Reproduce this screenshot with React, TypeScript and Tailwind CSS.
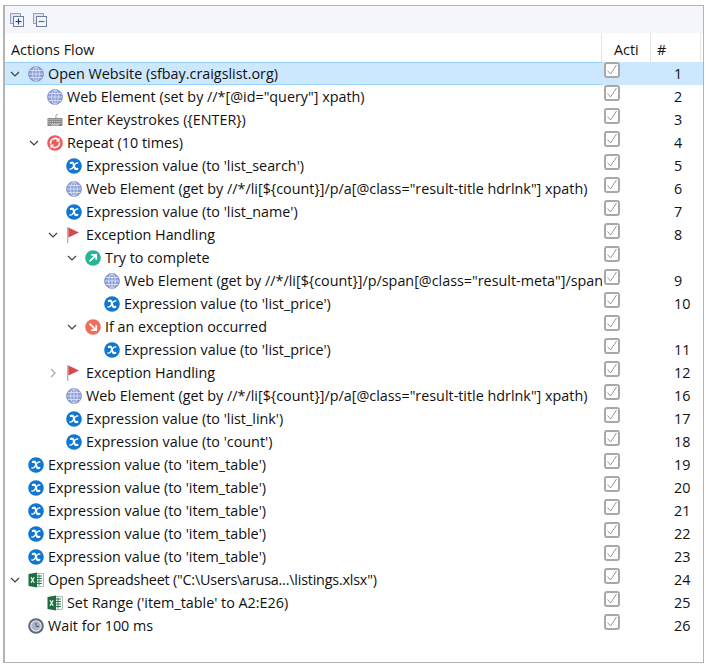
import React from 'react';

type IconName = 'globe' | 'expr' | 'keys' | 'repeat' | 'flag' | 'try' | 'catch' | 'excel' | 'clock';

type Row = {
  level: number;
  twisty?: 'open' | 'closed';
  icon: IconName;
  text: string;
  num?: number;
  selected?: boolean;
  tight?: boolean;
};

const rows: Row[] = [
  { level: 0, twisty: 'open', icon: 'globe', text: 'Open Website (sfbay.craigslist.org)', num: 1, selected: true },
  { level: 1, icon: 'globe', text: 'Web Element (set by //*[@id="query"] xpath)', num: 2 },
  { level: 1, icon: 'keys', text: 'Enter Keystrokes ({ENTER})', num: 3 },
  { level: 1, twisty: 'open', icon: 'repeat', text: 'Repeat (10 times)', num: 4 },
  { level: 2, icon: 'expr', text: "Expression value (to 'list_search')", num: 5 },
  { level: 2, icon: 'globe', text: 'Web Element (get by //*/li[${count}]/p/a[@class="result-title hdrlnk"] xpath)', num: 6 },
  { level: 2, icon: 'expr', text: "Expression value (to 'list_name')", num: 7 },
  { level: 2, twisty: 'open', icon: 'flag', text: 'Exception Handling', num: 8 },
  { level: 3, twisty: 'open', icon: 'try', text: 'Try to complete' },
  { level: 4, icon: 'globe', text: 'Web Element (get by //*/li[${count}]/p/span[@class="result-meta"]/span[@class="result-price"] xpath)', num: 9 },
  { level: 4, icon: 'expr', text: "Expression value (to 'list_price')", num: 10 },
  { level: 3, twisty: 'open', icon: 'catch', text: 'If an exception occurred' },
  { level: 4, icon: 'expr', text: "Expression value (to 'list_price')", num: 11 },
  { level: 2, twisty: 'closed', icon: 'flag', text: 'Exception Handling', num: 12 },
  { level: 2, icon: 'globe', text: 'Web Element (get by //*/li[${count}]/p/a[@class="result-title hdrlnk"] xpath)', num: 16 },
  { level: 2, icon: 'expr', text: "Expression value (to 'list_link')", num: 17 },
  { level: 2, icon: 'expr', text: "Expression value (to 'count')", num: 18 },
  { level: 0, icon: 'expr', text: "Expression value (to 'item_table')", num: 19 },
  { level: 0, icon: 'expr', text: "Expression value (to 'item_table')", num: 20 },
  { level: 0, icon: 'expr', text: "Expression value (to 'item_table')", num: 21 },
  { level: 0, icon: 'expr', text: "Expression value (to 'item_table')", num: 22 },
  { level: 0, icon: 'expr', text: "Expression value (to 'item_table')", num: 23 },
  { level: 0, twisty: 'open', icon: 'excel', text: 'Open Spreadsheet ("C:\\Users\\arusa...\\listings.xlsx")', num: 24, tight: true },
  { level: 1, icon: 'excel', text: "Set Range ('item_table' to A2:E26)", num: 25 },
  { level: 0, icon: 'clock', text: 'Wait for 100 ms', num: 26 },
];

const indents = ['pl-0', 'pl-[19px]', 'pl-[38px]', 'pl-[57px]', 'pl-[76px]'];

const Icon = ({ name }: { name: IconName }) => {
  const cls = 'w-4 h-4 shrink-0';
  switch (name) {
    case 'globe':
      return (
        <svg viewBox="0 0 16 16" className={cls}>
          <circle cx="8" cy="8" r="7.5" fill="#8d9fd8" stroke="#7f8ec4" strokeWidth="0.8" />
          <g fill="none" stroke="#dfe5f6" strokeWidth="0.8">
            <ellipse cx="8" cy="8" rx="3.4" ry="7.2" />
            <path d="M8 .8V15.2M.8 8H15.2M1.8 4.5H14.2M1.8 11.5H14.2" />
          </g>
        </svg>
      );
    case 'expr':
      return (
        <svg viewBox="0 0 16 16" className={cls}>
          <circle cx="8" cy="8" r="7.8" fill="#0f77d2" />
          <g fill="none" stroke="#fff" strokeLinecap="round">
            <path d="M4.8 5C6.8 4 7.6 5.4 8 7.6C8.4 10 9.2 11.8 11.4 10.8" strokeWidth="2.1" />
            <path d="M11.8 5C9.6 4.4 8.6 6.4 7.6 8.4C6.6 10.4 5.6 11.8 3.8 11" strokeWidth="1.3" />
          </g>
        </svg>
      );
    case 'keys':
      return (
        <svg viewBox="0 0 16 16" className={cls}>
          <path d="M9 6V3.5C9 2.6 10 2.4 11 2.2" fill="none" stroke="#9a9a9a" strokeWidth="1" />
          <rect x="0.5" y="6" width="15" height="8" fill="#8b8b8b" />
          <path d="M1.5 7.5H14.5M1.5 9.5H14.5M1.5 11.5H14.5" stroke="#e2e2e2" strokeWidth="0.7" strokeDasharray="1 0.8" />
          <rect x="4" y="12.3" width="8" height="1" fill="#d8d8d8" />
        </svg>
      );
    case 'repeat':
      return (
        <svg viewBox="0 0 16 16" className={cls}>
          <circle cx="8" cy="8" r="7.8" fill="#ee5a5a" />
          <g fill="none" stroke="#fff" strokeWidth="1.6">
            <path d="M3.6 8.6A4.5 4.5 0 0 1 10.8 4.4" />
            <path d="M12.4 7.4A4.5 4.5 0 0 1 5.2 11.6" />
          </g>
          <path d="M12.6 2.6V6.6H8.8Z M3.4 13.4V9.4H7.2Z" fill="#fff" />
        </svg>
      );
    case 'flag':
      return (
        <svg viewBox="0 0 16 16" className={cls}>
          <rect x="1" y="0" width="1.4" height="16" fill="#b5b5b8" />
          <path d="M2.4 0.5L13 5.4L2.4 10.4Z" fill="#d9484e" />
        </svg>
      );
    case 'try':
      return (
        <svg viewBox="0 0 16 16" className={cls}>
          <circle cx="8" cy="8" r="7.8" fill="#27b497" />
          <path d="M4.6 11.4L10.8 5.2M6.2 4.8H11.2V9.8" fill="none" stroke="#fff" strokeWidth="1.7" />
        </svg>
      );
    case 'catch':
      return (
        <svg viewBox="0 0 16 16" className={cls}>
          <circle cx="8" cy="8" r="7.8" fill="#ee6f5c" />
          <path d="M4.6 4.6L10.8 10.8M11.2 6.2V11.2H6.2" fill="none" stroke="#fff" strokeWidth="1.7" />
        </svg>
      );
    case 'excel':
      return (
        <svg viewBox="0 0 16 16" className={cls}>
          <rect x="7" y="1.5" width="8.5" height="13" fill="#fff" stroke="#7fa88f" strokeWidth="0.7" />
          <path d="M9 4H14M9 6.5H14M9 9H14M9 11.5H14M11 2.5V13.5" stroke="#2f7d50" strokeWidth="1" />
          <path d="M0.5 2L9 0.5V15.5L0.5 14Z" fill="#1d6f42" />
          <path d="M3 5.2L6.2 10.8M6.2 5.2L3 10.8" stroke="#fff" strokeWidth="1.2" />
        </svg>
      );
    case 'clock':
      return (
        <svg viewBox="0 0 16 16" className={cls}>
          <circle cx="8" cy="8" r="7.8" fill="#5f6b7d" />
          <circle cx="8" cy="8" r="5.2" fill="#aab4c6" stroke="#eef1f6" strokeWidth="1.1" />
          <path d="M8 4.6V8.4H11" fill="none" stroke="#4e596a" strokeWidth="1" />
        </svg>
      );
  }
};

const Twisty = ({ kind }: { kind?: 'open' | 'closed' }) => (
  <span className="w-[23px] h-4 shrink-0 pl-[5px] flex items-center">
    {kind === 'open' && (
      <svg viewBox="0 0 10 10" className="w-[10px] h-[10px]">
        <path d="M1 3L5 7L9 3" fill="none" stroke="#404040" strokeWidth="1.2" />
      </svg>
    )}
    {kind === 'closed' && (
      <svg viewBox="0 0 10 10" className="w-[10px] h-[10px]">
        <path d="M3 1L7 5L3 9" fill="none" stroke="#a6a6a6" strokeWidth="1.2" />
      </svg>
    )}
  </span>
);

const Checkbox = () => (
  <span className="ml-[2px] w-[16px] h-[16px] rounded-[3px] border-2 border-[#a8a8a8] bg-white flex items-center justify-center">
    <svg viewBox="0 0 12 12" className="w-3 h-3">
      <path d="M1.5 6.5L4.5 10L10.5 1" fill="none" stroke="#999" strokeWidth="1" />
    </svg>
  </span>
);

const ExpandAll = ({ minus }: { minus?: boolean }) => (
  <svg viewBox="0 0 14 14" className="w-[14px] h-[14px]">
    <rect x="0.5" y="0.5" width="10" height="10" fill="#dfe5f3" stroke="#8fa3c0" />
    <rect x="3.5" y="3.5" width="10" height="10" fill="#f2f5fb" stroke="#6f7f99" />
    <path d={minus ? 'M5.5 8.5H11.5' : 'M5.5 8.5H11.5M8.5 5.5V11.5'} stroke={minus ? '#56708f' : '#1f3f66'} strokeWidth="1.2" />
  </svg>
);

export default function App() {
  return (
    <div className="w-[706px] h-[666px] bg-white pt-[5px] pl-[3px] font-['Open_Sans',sans-serif] text-[14.35px] text-[#111]">
      <div className="w-[701px] h-[658px] border border-l-2 border-[#b4b4b4] flex flex-col overflow-hidden">
        {/* toolbar */}
        <div className="h-[27px] shrink-0 bg-[#f5f6fb] flex items-center gap-[9px] pl-[5px] pt-px">
          <ExpandAll />
          <ExpandAll minus />
        </div>

        {/* column headers */}
        <div className="h-[29px] shrink-0 flex items-center">
          <div className="w-[596px] pl-[6px] pt-[5px]">Actions Flow</div>
          <div className="w-[49px] h-full pl-[12px] pt-[5px] flex items-center border-l border-[#e5e5e5]">Acti</div>
          <div className="w-[51px] h-full pl-[6px] pt-[5px] flex items-center border-l border-r border-[#e5e5e5]">#</div>
        </div>

        {/* tree rows */}
        <div className="flex-1 flex flex-col">
          {rows.map((row, i) => (
            <div key={i} className={row.selected ? 'h-[23px] flex bg-[#cce8ff]' : 'h-[23px] flex'}>
              <div
                className={`w-[597px] flex items-center overflow-hidden whitespace-nowrap ${indents[row.level]} ${
                  row.selected ? 'border-y border-[#99d1ff]' : ''
                }`}
              >
                <Twisty kind={row.twisty} />
                <Icon name={row.icon} />
                <span className={row.tight ? 'ml-[4px] tracking-[-0.2px]' : 'ml-[4px]'}>{row.text}</span>
              </div>
              <div className="w-[49px]">
                <Checkbox />
              </div>
              <div className="flex-1 pl-[23px] flex items-center">{row.num}</div>
            </div>
          ))}
        </div>
      </div>
    </div>
  );
}
